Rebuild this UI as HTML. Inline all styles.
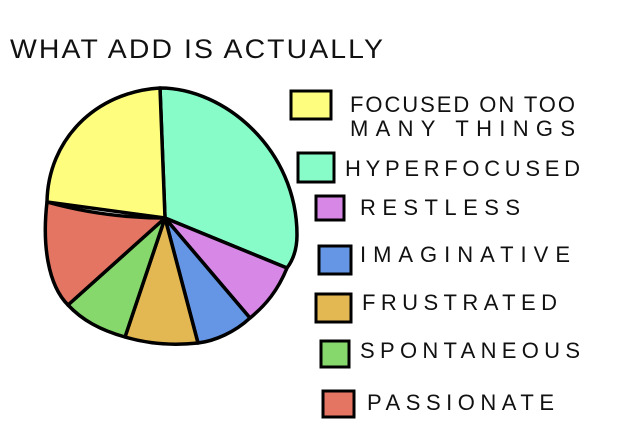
<!DOCTYPE html>
<html><head><style>
body{margin:0;width:625px;height:440px;background:#fff;overflow:hidden;}
svg{position:absolute;left:0;top:0}
text{font-family:"Liberation Sans",sans-serif;fill:#111;}
</style></head><body>
<svg width="625" height="440" viewBox="0 0 625 440">
<text x="10" y="58" font-size="27" letter-spacing="2" textLength="375" lengthAdjust="spacingAndGlyphs">WHAT ADD IS ACTUALLY</text>
<g stroke="#000" stroke-width="3.5" stroke-linejoin="round">
<path d="M165,218 L160,88 C225,88 297,150 297,235 C297,250 293,260 287,268 Z" fill="#88fcc8"/>
<path d="M165,218 L287,268 C278,290 266,305 250,318 Z" fill="#d787e6"/>
<path d="M165,218 L250,318 C235,332 215,341 198,343 Z" fill="#6596e6"/>
<path d="M165,218 L198,343 C170,346 145,343 125,337 Z" fill="#e3b752"/>
<path d="M165,218 L125,337 C100,330 82,320 68,305 Z" fill="#86d76c"/>
<path d="M165,218 L68,305 C48,285 42,245 47,202 C90,214 130,218 165,218 Z" fill="#e47563"/>
<path d="M165,218 L47,202 C48,140 95,92 160,88 Z" fill="#fefd7e"/>
</g>
<g stroke="#000" stroke-width="3">
<rect x="291" y="91" width="40" height="28" fill="#fefd7e"/>
<rect x="298" y="153" width="36" height="29" fill="#88fcc8"/>
<rect x="316" y="196" width="28" height="24" fill="#d787e6"/>
<rect x="319" y="246" width="32" height="28" fill="#6596e6"/>
<rect x="316" y="294" width="35" height="28" fill="#e3b752"/>
<rect x="321" y="341" width="28" height="26" fill="#86d76c"/>
<rect x="323" y="391" width="31" height="26" fill="#e47563"/>
</g>
<g font-size="22" lengthAdjust="spacingAndGlyphs">
<text x="350" y="112" textLength="225">FOCUSED ON TOO</text>
<text x="350" y="136" textLength="225">MANY THINGS</text>
<text x="345" y="176" textLength="235">HYPERFOCUSED</text>
<text x="360" y="215" textLength="160">RESTLESS</text>
<text x="360" y="262" textLength="210">IMAGINATIVE</text>
<text x="362" y="310" textLength="195">FRUSTRATED</text>
<text x="360" y="358" textLength="220">SPONTANEOUS</text>
<text x="367" y="410" textLength="187">PASSIONATE</text>
</g>
</svg>
</body></html>
